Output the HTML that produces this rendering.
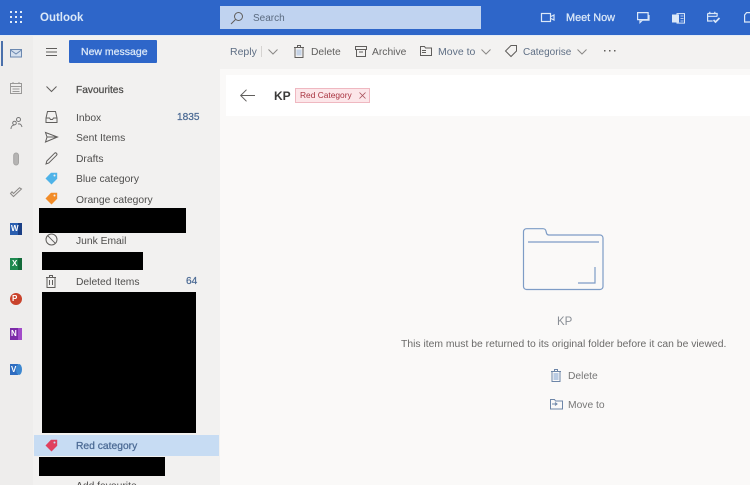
<!DOCTYPE html>
<html lang="en"><head><meta charset="utf-8"><title>Outlook</title>
<style>
*{box-sizing:border-box}
html,body{margin:0;padding:0;width:750px;height:485px;overflow:hidden}
body{background:#faf9f8;font-family:"Liberation Sans",sans-serif;color:#444}
#p{position:absolute;left:0;top:0;width:750px;height:485px;overflow:hidden;filter:blur(.3px)}
.a{position:absolute}
.t{position:absolute;white-space:nowrap;font-size:10.3px;line-height:14px;color:#4f4e4d}
.m{-webkit-text-stroke:.25px currentColor}
.k{position:absolute;background:#000}
svg{position:absolute;overflow:visible;fill:none}
.s{stroke:#605e5c;stroke-width:1}
.w{stroke:#dbe8f8;stroke-width:1.2}
</style></head><body><div id="p">
<div class="a" style="left:0;top:0;width:750px;height:35px;background:#2e66c9"></div>
<div class="a" style="left:0;top:35px;width:750px;height:1px;background:#e4ecf6"></div>
<svg style="left:10px;top:11px" width="12" height="13"><g fill="#e3edf9"><rect width="2" height="2"/><rect x="5" width="2" height="2"/><rect x="10" width="2" height="2"/><rect y="5" width="2" height="2"/><rect x="5" y="5" width="2" height="2"/><rect x="10" y="5" width="2" height="2"/><rect y="10" width="2" height="2"/><rect x="5" y="10" width="2" height="2"/><rect x="10" y="10" width="2" height="2"/></g></svg>
<div class="t" style="left:40px;top:11px;font-size:11.5px;font-weight:bold;color:#dbe8f8">Outlook</div>
<div class="a" style="left:220px;top:6px;width:261px;height:23px;background:#c0d3f0"></div>
<svg style="left:230px;top:11px" width="14" height="14" class="s"><circle cx="8.500" cy="5.500" r="4"/><path d="M5.500 8.500L1 13"/></svg>
<div class="t" style="left:253px;top:12px;font-size:10px;color:#5b6b80">Search</div>
<svg style="left:541px;top:13px" width="14" height="10" class="w"><rect x=".5" y=".5" width="9" height="8"/><path d="M10 3.500l3-1.500v5l-3-1.500"/></svg>
<div class="t m" style="left:566px;top:11px;font-size:10.900px;color:#dbe8f8">Meet Now</div>
<svg style="left:637px;top:12px" width="13" height="12" class="w"><path d="M.6.600h10.500v7H.6zM3 7.600v3l2.500-2.500h6.500V3"/></svg>
<svg style="left:672px;top:13px" width="13" height="11"><rect x="5" y=".6" width="7.500" height="9.500" stroke="#dbe8f8"/><path d="M8.500 3h3M8.500 5.500h3M8.500 8h3" stroke="#dbe8f8" stroke-width=".8"/><rect x="0" y="1.500" width="7" height="8" fill="#dbe8f8"/></svg>
<svg style="left:707px;top:11px" width="14" height="13" class="w"><path d="M.6 2.500h9.500v3M.6 2.500v7.500h5M2.800 .8v2.500M7.800 .8v2.500M.6 5.300h9.500"/><path d="M6.500 9l2 2 4-4" stroke-width="1.700"/></svg>
<svg style="left:744px;top:12px" width="12" height="12" class="w"><path d="M.6 10V3l2-2.400h8V10z"/></svg>

<div class="a" style="left:0;top:36px;width:34px;height:449px;background:#eeedec"></div>
<div class="a" style="left:33px;top:36px;width:187px;height:449px;background:#f2f1f0"></div>
<div class="a" style="left:220px;top:36px;width:530px;height:33px;background:#f3f2f1"></div>
<div class="a" style="left:1px;top:41px;width:2px;height:25px;background:#4a70ab"></div>
<svg style="left:10px;top:49px" width="12" height="9" stroke="#6b88b0"><rect x=".5" y=".5" width="11" height="7.500" fill="#d5e0ee"/><path d="M.5 1l5.500 4 5.500-4"/></svg>
<svg style="left:10px;top:82px" width="12" height="12" stroke="#9a9998"><rect x=".5" y="1.500" width="11" height="10"/><path d="M.5 4.500h11M3 0v2M9 0v2M2.500 7h7M2.500 9.500h7"/></svg>
<svg style="left:11px;top:117px" width="12" height="12" stroke="#777"><circle cx="7.500" cy="2.500" r="2"/><circle cx="3.500" cy="6" r="1.800"/><path d="M0 12c0-2.500 1.500-4 3.500-4M7 7c2-.5 3.500.5 4 3"/></svg>
<svg style="left:13px;top:153px" width="7" height="12"><rect x=".7" y="0" width="4.800" height="12" rx="2.400" fill="#b5b4b3" stroke="#a5a4a3"/></svg>
<svg style="left:10px;top:187px" width="12" height="11" stroke="#8a8886"><path d="M.5 6.500L3.500 9.500 11.500 2 9.500.8 3.500 6.500 2 4.800z"/></svg>
<div class="a" style="left:10px;top:223px;width:12px;height:12px;background:#2b5fb0"></div><div class="a" style="left:18px;top:223px;width:4px;height:12px;background:#1a3f85"></div><div class="t" style="left:11px;top:223px;font-size:8px;line-height:12px;color:#fff;font-weight:bold">W</div>
<div class="a" style="left:10px;top:258px;width:12px;height:12px;background:#1e8a50"></div><div class="a" style="left:18px;top:258px;width:4px;height:12px;background:#136a3a"></div><div class="t" style="left:12px;top:258px;font-size:8px;line-height:12px;color:#fff;font-weight:bold">X</div>
<div class="a" style="left:10px;top:293px;width:12px;height:12px;background:#c9432c;border-radius:50%"></div><div class="t" style="left:12px;top:293px;font-size:8px;line-height:12px;color:#fff;font-weight:bold">P</div>
<div class="a" style="left:10px;top:328px;width:12px;height:12px;background:#7c2ba8"></div><div class="a" style="left:18px;top:328px;width:4px;height:12px;background:#a24bc9"></div><div class="t" style="left:11px;top:328px;font-size:8px;line-height:12px;color:#fff;font-weight:bold">N</div>
<div class="a" style="left:10px;top:364px;width:8px;height:11px;background:#2e6cc0"></div><div class="a" style="left:16px;top:364px;width:6px;height:11px;background:#3c87d0;border-radius:50%"></div><div class="t" style="left:11px;top:364px;font-size:8px;line-height:11px;color:#fff;font-weight:bold">V</div>

<svg style="left:46px;top:48px" width="11" height="8" stroke="#605e5c"><path d="M0 .5h11M0 4h11M0 7.500h11"/></svg>
<div class="a" style="left:69px;top:40px;width:88px;height:23px;background:#2e66c9;border-radius:1px"></div>
<div class="t m" style="left:81px;top:45px;font-size:10.500px;color:#dbe8f8">New message</div>
<svg style="left:46px;top:86px" width="11" height="7" class="s"><path d="M.5.500l5 5 5-5"/></svg>
<div class="t m" style="left:76px;top:84px;color:#4f4e4d;font-size:10.200px">Favourites</div>

<svg style="left:45px;top:111px" width="13" height="12" class="s"><path d="M2.500.5h8l1.500 6.500v4.500H1V7zM1 7h3.500l1 1.500h2L8.500 7H12"/></svg>
<div class="t" style="left:76px;top:112px">Inbox</div>
<div class="t m" style="left:177px;top:111px;font-size:10.100px;color:#4b6a94">1835</div>
<svg style="left:45px;top:132px" width="13" height="11" class="s"><path d="M.5.500L12.500 5 .5 10l1.500-5zM2 5h10"/></svg>
<div class="t" style="left:76px;top:132px">Sent Items</div>
<svg style="left:45px;top:152px" width="13" height="13" class="s"><path d="M1 12l.8-3L9.500 1.300a1.200 1.200 0 012 2L3.800 11z"/></svg>
<div class="t" style="left:76px;top:153px">Drafts</div>
<svg style="left:45px;top:172px" width="13" height="13"><path d="M6 .8h6.200v6L6.500 12.500.5 6.500z" fill="#4fb3e8"/><circle cx="9.500" cy="3.500" r="1" fill="#f2f1f0"/></svg>
<div class="t" style="left:76px;top:173px">Blue category</div>
<svg style="left:45px;top:192px" width="13" height="13"><path d="M6 .8h6.200v6L6.500 12.500.5 6.500z" fill="#f28c28"/><circle cx="9.500" cy="3.500" r="1" fill="#f2f1f0"/></svg>
<div class="t" style="left:76px;top:194px">Orange category</div>
<div class="k" style="left:39px;top:208px;width:147px;height:25px"></div>
<svg style="left:45px;top:233px" width="13" height="13" class="s"><circle cx="6.500" cy="6.500" r="5.500"/><path d="M2.700 2.700l7.600 7.600"/></svg>
<div class="t" style="left:76px;top:235px">Junk Email</div>
<div class="k" style="left:42px;top:252px;width:101px;height:18px"></div>
<svg style="left:46px;top:275px" width="10" height="13" class="s"><path d="M1 2.500h8v10H1zM0 2.500h10M3.500 2.500V.5h3v2M3.500 5v5M6.500 5v5"/></svg>
<div class="t" style="left:76px;top:276px">Deleted Items</div>
<div class="t m" style="left:186px;top:275px;font-size:10.100px;color:#4b6a94">64</div>
<div class="k" style="left:42px;top:292px;width:154px;height:141px"></div>
<div class="a" style="left:34px;top:435px;width:185px;height:21px;background:#c7dcf3"></div>
<svg style="left:45px;top:439px" width="13" height="13"><path d="M6 .8h6.200v6L6.500 12.500.5 6.500z" fill="#e0405e"/><circle cx="9.500" cy="3.500" r="1" fill="#c7dcf3"/></svg>
<div class="t m" style="left:76px;top:440px;color:#4b6a94;font-size:10.300px">Red category</div>
<div class="k" style="left:39px;top:457px;width:126px;height:19px"></div>
<div class="t" style="left:76px;top:480px">Add favourite</div>

<div class="t" style="left:230px;top:45px;font-size:10.500px;color:#5f6f85">Reply</div>
<div class="a" style="left:261px;top:46px;width:1px;height:11px;background:#d5d3d1"></div>
<svg style="left:268px;top:49px" width="10" height="6" stroke="#8a8886"><path d="M.5.500L5 5 9.500.500"/></svg>
<svg style="left:294px;top:45px" width="10" height="13" class="s"><path d="M1 2.500h8v10H1zM0 2.500h10M3.500 2.500V.5h3v2"/><rect x="2.500" y="4.500" width="5" height="6" fill="#c5d3e6" stroke="none"/></svg>
<div class="t" style="left:311px;top:46px;color:#5f5e5d">Delete</div>
<svg style="left:355px;top:46px" width="12" height="11" class="s"><path d="M.5.500h11v3H.5zM1.500 3.500v7h9v-7M4 6h4"/></svg>
<div class="t" style="left:372px;top:46px;color:#5f5e5d">Archive</div>
<svg style="left:420px;top:46px" width="12" height="10" class="s"><path d="M.5 9.500V.5h4l1 1.500h6v7.500zM2 4.500h4M2 6.500h4"/></svg>
<div class="t" style="left:438px;top:45px;font-size:10.500px;color:#5f6f85">Move to</div>
<svg style="left:481px;top:49px" width="10" height="6" stroke="#8a8886"><path d="M.5.500L5 5 9.500.500"/></svg>
<svg style="left:505px;top:45px" width="12" height="12" class="s"><path d="M6 .5h5.500V6L6 11.500.5 6z"/></svg>
<div class="t" style="left:523px;top:46px;font-size:10px;color:#5f6f85">Categorise</div>
<svg style="left:577px;top:49px" width="10" height="6" stroke="#8a8886"><path d="M.5.500L5 5 9.500.500"/></svg>
<svg style="left:604px;top:50px" width="12" height="2"><rect width="1.500" height="1.500" fill="#605e5c"/><rect x="5" width="1.500" height="1.500" fill="#605e5c"/><rect x="10" width="1.500" height="1.500" fill="#605e5c"/></svg>

<div class="a" style="left:220px;top:69px;width:530px;height:416px;background:#faf9f8"></div>
<div class="a" style="left:226px;top:75px;width:524px;height:41px;background:#fff"></div>
<svg style="left:240px;top:89px" width="15" height="13" class="s"><path d="M15 6.500H.7M6.500.7L.7 6.500l5.800 5.800"/></svg>
<div class="t" style="left:274px;top:89px;font-size:12px;font-weight:bold;color:#3b3a39">KP</div>
<div class="a" style="left:295px;top:88px;width:75px;height:15px;background:#fce6e9;border:1px solid #efb8c1"></div>
<div class="t" style="left:300px;top:89px;font-size:8.400px;line-height:13px;color:#a8323f">Red Category</div>
<svg style="left:359px;top:92px" width="7" height="7" stroke="#a8505a" stroke-width=".8"><path d="M.5.500l6 6M6.500.500l-6 6"/></svg>

<svg style="left:523px;top:228px" width="81" height="62" stroke="#7d9cc6" stroke-width="1.200"><path d="M3.500.7h16.500a3 3 0 013 2.500l.5 2a2.500 2.500 0 002.500 1.800h51a3 3 0 013 3V58.500a3 3 0 01-3 3H3.500a3 3 0 01-3-3V3.700a3 3 0 013-3z"/><path d="M5 14h71M55 55h17V39"/></svg>
<div class="t" style="left:557px;top:315px;font-size:11.500px;color:#8a8f96">KP</div>
<div class="t" style="left:401px;top:338px;font-size:10.360px;color:#6b6a69">This item must be returned to its original folder before it can be viewed.</div>
<svg style="left:551px;top:369px" width="10" height="13" stroke="#6d86a8"><path d="M1 2.500h8v10H1zM0 2.500h10M3.500 2.500V.5h3v2"/><rect x="2.500" y="4" width="5" height="7" fill="#b9cbe3" stroke="none"/></svg>
<div class="t" style="left:568px;top:370px;color:#777">Delete</div>
<svg style="left:550px;top:399px" width="13" height="11" stroke="#6d86a8"><path d="M.5 10V.5h4l1 1.500h7v8zM2 5h5M5 3.500L7 5 5 6.500"/></svg>
<div class="t" style="left:568px;top:399px;color:#777">Move to</div>
</div></body></html>
